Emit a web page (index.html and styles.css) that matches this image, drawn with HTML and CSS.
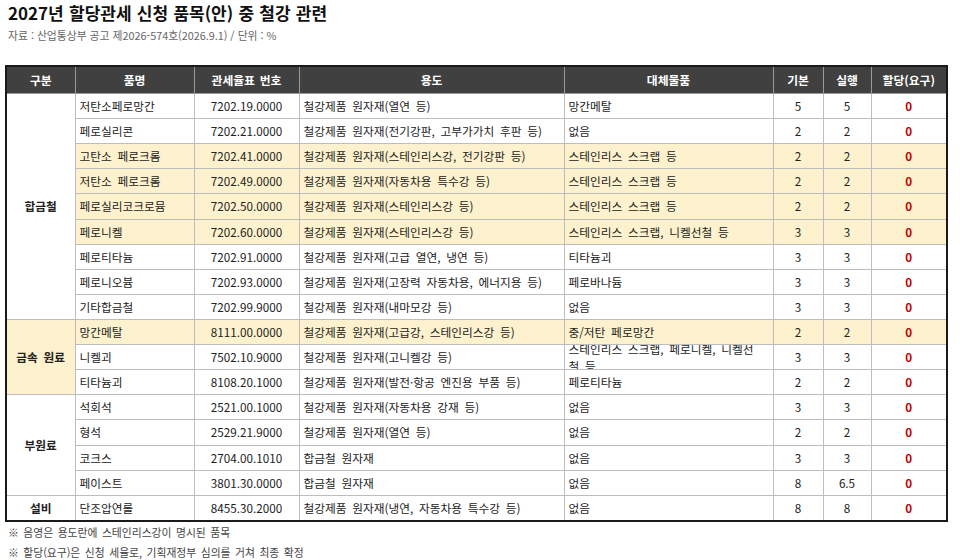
FILE: index.html
```html
<!DOCTYPE html>
<html lang="ko">
<head>
<meta charset="utf-8">
<link rel="stylesheet" href="styles.css">
</head>
<body>
<div class="page">
  <h1 class="title">2027년 할당관세 신청 품목(안) 중 철강 관련</h1>
  <p class="source">자료 : 산업통상부 공고 제2026-574호(2026.9.1) / 단위 : %</p>
  <table class="tbl">
    <colgroup>
      <col class="c1"><col class="c2"><col class="c3"><col class="c4"><col class="c5"><col class="c6"><col class="c7"><col class="c8">
    </colgroup>
    <thead>
      <tr><th>구분</th><th>품명</th><th>관세율표 번호</th><th>용도</th><th>대체물품</th><th>기본</th><th>실행</th><th>할당(요구)</th></tr>
    </thead>
    <tbody>
      <tr><td class="grp" rowspan="9">합금철</td><td class="l">저탄소페로망간</td><td class="c">7202.19.0000</td><td class="l">철강제품 원자재(열연 등)</td><td class="l">망간메탈</td><td class="c">5</td><td class="c">5</td><td class="z">0</td></tr>
      <tr><td class="l">페로실리콘</td><td class="c">7202.21.0000</td><td class="l">철강제품 원자재(전기강판, 고부가가치 후판 등)</td><td class="l">없음</td><td class="c">2</td><td class="c">2</td><td class="z">0</td></tr>
      <tr class="hl"><td class="l">고탄소 페로크롬</td><td class="c">7202.41.0000</td><td class="l">철강제품 원자재(스테인리스강, 전기강판 등)</td><td class="l">스테인리스 스크랩 등</td><td class="c">2</td><td class="c">2</td><td class="z">0</td></tr>
      <tr class="hl"><td class="l">저탄소 페로크롬</td><td class="c">7202.49.0000</td><td class="l">철강제품 원자재(자동차용 특수강 등)</td><td class="l">스테인리스 스크랩 등</td><td class="c">2</td><td class="c">2</td><td class="z">0</td></tr>
      <tr class="hl"><td class="l">페로실리코크로뮴</td><td class="c">7202.50.0000</td><td class="l">철강제품 원자재(스테인리스강 등)</td><td class="l">스테인리스 스크랩 등</td><td class="c">2</td><td class="c">2</td><td class="z">0</td></tr>
      <tr class="hl"><td class="l">페로니켈</td><td class="c">7202.60.0000</td><td class="l">철강제품 원자재(스테인리스강 등)</td><td class="l">스테인리스 스크랩, 니켈선철 등</td><td class="c">3</td><td class="c">3</td><td class="z">0</td></tr>
      <tr><td class="l">페로티타늄</td><td class="c">7202.91.0000</td><td class="l">철강제품 원자재(고급 열연, 냉연 등)</td><td class="l">티타늄괴</td><td class="c">3</td><td class="c">3</td><td class="z">0</td></tr>
      <tr><td class="l">페로니오븀</td><td class="c">7202.93.0000</td><td class="l">철강제품 원자재(고장력 자동차용, 에너지용 등)</td><td class="l">페로바나듐</td><td class="c">3</td><td class="c">3</td><td class="z">0</td></tr>
      <tr><td class="l">기타합금철</td><td class="c">7202.99.9000</td><td class="l">철강제품 원자재(내마모강 등)</td><td class="l">없음</td><td class="c">3</td><td class="c">3</td><td class="z">0</td></tr>
      <tr class="hl"><td class="grp" rowspan="3">금속 원료</td><td class="l">망간메탈</td><td class="c">8111.00.0000</td><td class="l">철강제품 원자재(고급강, 스테인리스강 등)</td><td class="l">중/저탄 페로망간</td><td class="c">2</td><td class="c">2</td><td class="z">0</td></tr>
      <tr><td class="l">니켈괴</td><td class="c">7502.10.9000</td><td class="l">철강제품 원자재(고니켈강 등)</td><td class="l"><div class="clip">스테인리스 스크랩, 페로니켈, 니켈선<br>철 등</div></td><td class="c">3</td><td class="c">3</td><td class="z">0</td></tr>
      <tr><td class="l">티타늄괴</td><td class="c">8108.20.1000</td><td class="l">철강제품 원자재(발전·항공 엔진용 부품 등)</td><td class="l">페로티타늄</td><td class="c">2</td><td class="c">2</td><td class="z">0</td></tr>
      <tr><td class="grp" rowspan="4">부원료</td><td class="l">석회석</td><td class="c">2521.00.1000</td><td class="l">철강제품 원자재(자동차용 강재 등)</td><td class="l">없음</td><td class="c">3</td><td class="c">3</td><td class="z">0</td></tr>
      <tr><td class="l">형석</td><td class="c">2529.21.9000</td><td class="l">철강제품 원자재(열연 등)</td><td class="l">없음</td><td class="c">2</td><td class="c">2</td><td class="z">0</td></tr>
      <tr><td class="l">코크스</td><td class="c">2704.00.1010</td><td class="l">합금철 원자재</td><td class="l">없음</td><td class="c">3</td><td class="c">3</td><td class="z">0</td></tr>
      <tr><td class="l">페이스트</td><td class="c">3801.30.0000</td><td class="l">합금철 원자재</td><td class="l">없음</td><td class="c">8</td><td class="c">6.5</td><td class="z">0</td></tr>
      <tr><td class="grp">설비</td><td class="l">단조압연롤</td><td class="c">8455.30.2000</td><td class="l">철강제품 원자재(냉연, 자동차용 특수강 등)</td><td class="l">없음</td><td class="c">8</td><td class="c">8</td><td class="z">0</td></tr>
    </tbody>
  </table>
  <p class="note">※ 음영은 용도란에 스테인리스강이 명시된 품목</p>
  <p class="note">※ 할당(요구)은 신청 세율로, 기획재정부 심의를 거쳐 최종 확정</p>
</div>
</body>
</html>
```
FILE: styles.css
```css
html, body {
  margin: 0;
  padding: 0;
  background: #ffffff;
}
body {
  font-family: "Noto Sans CJK KR", "Noto Sans", sans-serif;
  color: #222222;
}
.page {
  padding: 0 0 0 5px;
}
.title {
  margin: 0;
  padding: 2px 0 0 3px;
  font-size: 17px;
  line-height: 22px;
  font-weight: 700;
  color: #111111;
  word-spacing: 0.5px;
}
.source {
  margin: 0;
  padding: 3px 0 0 3px;
  font-size: 10.8px;
  line-height: 16px;
  color: #666666;
}
.tbl {
  margin-top: 22px;
  border-collapse: collapse;
  table-layout: fixed;
  width: 941px;
  border: 2px solid #1a1a1a;
  font-size: 11.7px;
  word-spacing: 2.5px;
}
.c1 { width: 69px; }
.c2 { width: 119px; }
.c3 { width: 105px; }
.c4 { width: 265px; }
.c5 { width: 209px; }
.c6 { width: 50px; }
.c7 { width: 48px; }
.c8 { width: 76px; }
.tbl th {
  background: #404040;
  color: #ffffff;
  font-weight: 700;
  height: 26px;
  padding: 0;
  border: 1px solid #9a9a9a;
  border-top: 2px solid #1a1a1a;
  line-height: 14px;
  font-size: 11.8px;
  word-spacing: 1.5px;
}
.tbl td {
  height: 24.12px;
  padding: 0 4px;
  border: 1px solid #bdbdbd;
  line-height: 14px;
  white-space: nowrap;
  overflow: hidden;
}
.tbl td.l { text-align: left; }
.tbl td.c { text-align: center; }
.tbl td.z {
  text-align: center;
  color: #c00000;
  font-weight: 700;
}
.tbl td.grp {
  text-align: center;
  font-weight: 700;
  color: #222222;
  background: #ffffff;
}
.tbl tr.hl td { background: #fdf2cd; }
.tbl tr.hl td.grp { background: #fdf2cd; }
.clip {
  height: 24px;
  overflow: hidden;
  display: flex;
  flex-direction: column;
  justify-content: center;
  line-height: 17px;
  white-space: nowrap;
}
.note {
  margin: 0;
  padding: 2px 0 0 3px;
  font-size: 10.8px;
  line-height: 17px;
  color: #444444;
  word-spacing: 1.5px;
}
.note + .note {
  padding-top: 3px;
}
```
